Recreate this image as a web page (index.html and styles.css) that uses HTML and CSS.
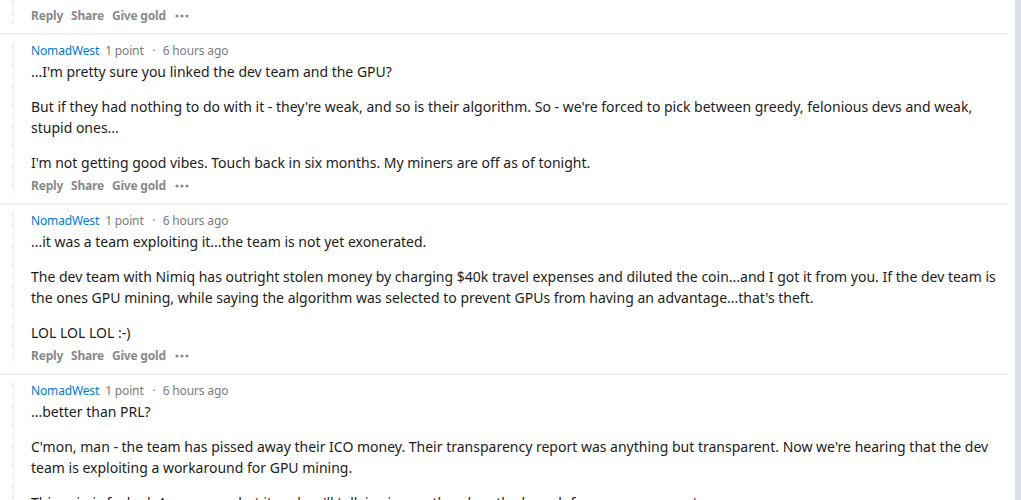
FILE: index.html
```html
<!DOCTYPE html>
<html lang="en">
<head>
<meta charset="utf-8">
<title>Comments</title>
<link rel="stylesheet" href="styles.css">
</head>
<body>
<div class="card">
  <div class="list">
    <div class="comment">
      <div class="thread"><span class="line"></span></div>
      <div class="content">
        <div class="body">
          <p>...they're just a group of people that probably only want to get paid, and they simply play it safe anyway.</p>
        </div>
        <div class="actions">
          <span>Reply</span><span>Share</span><span>Give gold</span>
          <svg class="dots" width="14" height="4" viewBox="0 0 14 4"><circle cx="2" cy="2" r="1.6"/><circle cx="7" cy="2" r="1.6"/><circle cx="12" cy="2" r="1.6"/></svg>
        </div>
      </div>
    </div>

    <div class="comment">
      <div class="thread"><span class="line"></span></div>
      <div class="content">
        <div class="meta"><span class="user">NomadWest</span><span class="pts">1 point</span><span class="dot">·</span><span class="time">6 hours ago</span></div>
        <div class="body">
          <p>...I'm pretty sure you linked the dev team and the GPU?</p>
          <p>But if they had nothing to do with it - they're weak, and so is their algorithm. So - we're forced to pick between greedy, felonious devs and weak, stupid ones...</p>
          <p>I'm not getting good vibes. Touch back in six months. My miners are off as of tonight.</p>
        </div>
        <div class="actions">
          <span>Reply</span><span>Share</span><span>Give gold</span>
          <svg class="dots" width="14" height="4" viewBox="0 0 14 4"><circle cx="2" cy="2" r="1.6"/><circle cx="7" cy="2" r="1.6"/><circle cx="12" cy="2" r="1.6"/></svg>
        </div>
      </div>
    </div>

    <div class="comment">
      <div class="thread"><span class="line"></span></div>
      <div class="content">
        <div class="meta"><span class="user">NomadWest</span><span class="pts">1 point</span><span class="dot">·</span><span class="time">6 hours ago</span></div>
        <div class="body">
          <p>...it was a team exploiting it...the team is not yet exonerated.</p>
          <p>The dev team with Nimiq has outright stolen money by charging $40k travel expenses and diluted the coin...and I got it from you. If the dev team is the ones GPU mining, while saying the algorithm was selected to prevent GPUs from having an advantage...that's theft.</p>
          <p>LOL LOL LOL :-)</p>
        </div>
        <div class="actions">
          <span>Reply</span><span>Share</span><span>Give gold</span>
          <svg class="dots" width="14" height="4" viewBox="0 0 14 4"><circle cx="2" cy="2" r="1.6"/><circle cx="7" cy="2" r="1.6"/><circle cx="12" cy="2" r="1.6"/></svg>
        </div>
      </div>
    </div>

    <div class="comment">
      <div class="thread"><span class="line"></span></div>
      <div class="content">
        <div class="meta"><span class="user">NomadWest</span><span class="pts">1 point</span><span class="dot">·</span><span class="time">6 hours ago</span></div>
        <div class="body">
          <p>...better than PRL?</p>
          <p>C'mon, man - the team has pissed away their ICO money. Their transparency report was anything but transparent. Now we're hearing that the dev team is exploiting a workaround for GPU mining.</p>
          <p>This coin is fucked. Anyone can bet it and we'll talk in six months when the breach for everyone goes to zero.</p>
        </div>
        <div class="actions">
          <span>Reply</span><span>Share</span><span>Give gold</span>
          <svg class="dots" width="14" height="4" viewBox="0 0 14 4"><circle cx="2" cy="2" r="1.6"/><circle cx="7" cy="2" r="1.6"/><circle cx="12" cy="2" r="1.6"/></svg>
        </div>
      </div>
    </div>
  </div>
</div>
</body>
</html>
```

FILE: styles.css
```css
html, body {
  margin: 0;
  padding: 0;
  background: #dae0e6;
  overflow: hidden;
}
.card {
  width: 1015px;
  background: #ffffff;
  height: 600px;
}
.list {
  margin-top: -28px;
  padding-right: 7px;
}
.comment {
  display: flex;
  border-bottom: 2px solid #edeff1;
  padding: 8px 8px 9px 0;
}
.comment:first-child .body {
  margin-top: 0;
}
.comment:first-child .actions {
  margin-top: 7px;
}
.thread {
  width: 31px;
  flex: none;
  display: flex;
  justify-content: flex-start;
}
.line {
  display: block;
  width: 2px;
  margin-left: 12px;
  background: repeating-linear-gradient(to bottom, #edeff1 0 6px, transparent 6px 10px);
}
.content {
  flex: 1;
  min-width: 0;
}
.meta {
  font-family: "Noto Sans", "Liberation Sans", sans-serif;
  font-size: 12px;
  line-height: 16px;
  color: #7c7c7c;
  display: flex;
  align-items: center;
  white-space: nowrap;
  letter-spacing: -0.15px;
}
.user {
  color: #0079d3;
  margin-right: 6px;
}
.dot {
  margin: 0 7px 0 9px;
}
.body {
  margin-top: 2px;
  font-family: "Noto Sans", "Liberation Sans", sans-serif;
  font-size: 14px;
  line-height: 21px;
  color: #1c1c1c;
}
.body p {
  margin: 0;
}
.body p + p {
  margin-top: 14px;
}
.actions {
  margin-top: 5px;
  height: 16px;
  display: flex;
  align-items: center;
  gap: 8px;
  font-family: "Noto Sans", "Liberation Sans", sans-serif;
  font-size: 12px;
  font-weight: 700;
  line-height: 16px;
  letter-spacing: -0.2px;
  color: #878a8c;
}
.dots {
  fill: #878a8c;
  margin-left: 1px;
}
```
